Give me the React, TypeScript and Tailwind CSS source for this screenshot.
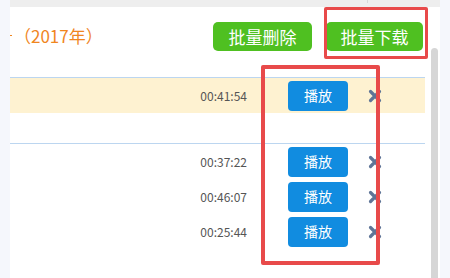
import React from "react";

const rows = [
  { time: "00:37:22" },
  { time: "00:46:07" },
  { time: "00:25:44" },
];

function XIcon() {
  return (
    <svg width="14" height="14" viewBox="0 0 14 14" className="block">
      <path d="M2.5 2.5 L11.5 11.5 M11.5 2.5 L2.5 11.5" stroke="#5f7597" strokeWidth="3.2" strokeLinecap="round" />
    </svg>
  );
}

function Row({ time, highlight }: { time: string; highlight?: boolean }) {
  return (
    <div className={`flex h-[35px] items-center ${highlight ? "bg-[#fef2d1]" : ""}`}>
      <div className="w-[237px] text-right text-[12px] text-[#555555]">{time}</div>
      <button className="ml-[41px] flex h-[30px] w-[60px] items-center justify-center rounded-[4px] bg-[#118ce0] text-[14px] text-white">
        播放
      </button>
      <div className="ml-[20px]">
        <XIcon />
      </div>
    </div>
  );
}

export default function App() {
  return (
    <div
      className="relative flex h-[278px] w-[450px] overflow-hidden bg-[#f5f7fc]"
      style={{ fontFamily: '"Noto Sans CJK SC", "Noto Sans", sans-serif' }}
    >
      <div className="w-[10px] shrink-0" />
      <div className="flex w-[430px] shrink-0 flex-col">
        <div className="relative h-[7px] bg-[#eeeeee]">
          <div className="absolute left-[357px] top-0 h-[3px] w-px bg-[#d8d8d8]" />
        </div>
        <div className="flex flex-1">
          <div className="w-[421px] bg-white">
            {/* header */}
            <div className="flex h-[44px] items-end">
              <div className="flex items-center">
                <div className="mb-[1px] h-[1.5px] w-[2px] bg-[#f0861f]" />
                <span className="ml-[2px] text-[17px] leading-[30px] text-[#f0861f]">（2017年）</span>
              </div>
              <div className="ml-auto flex h-[37px] items-start gap-[14px] pr-[8px] pt-[8px]">
                <button className="flex h-[29px] w-[99px] items-center justify-center rounded-[5px] bg-[#4fc021] text-[17px] text-white">
                  批量删除
                </button>
                <button className="flex h-[29px] w-[97px] items-center justify-center rounded-[5px] bg-[#4fc021] text-[17px] text-white">
                  批量下载
                </button>
              </div>
            </div>
            {/* tables */}
            <div className="mt-[26px] w-[415px]">
              <div className="border-t border-[#bcd6f0]">
                <Row time="00:41:54" highlight />
              </div>
              <div className="h-[30px]" />
              <div className="border-t border-[#bcd6f0]">
                {rows.map((r) => (
                  <Row key={r.time} time={r.time} />
                ))}
              </div>
            </div>
          </div>
          <div className="w-[9px] bg-white pt-[41px]">
            <div className="h-full w-[7px] rounded-t-[4px] bg-[#d6d6d6]" />
          </div>
        </div>
      </div>
      {/* annotation boxes */}
      <div className="absolute left-[324px] top-[7px] h-[52px] w-[104px] rounded-[2px] border-[3px] border-[#e84a4a]" />
      <div className="absolute left-[261px] top-[65px] h-[200px] w-[119px] rounded-[2px] border-[4px] border-[#e84a4a]" />
    </div>
  );
}
